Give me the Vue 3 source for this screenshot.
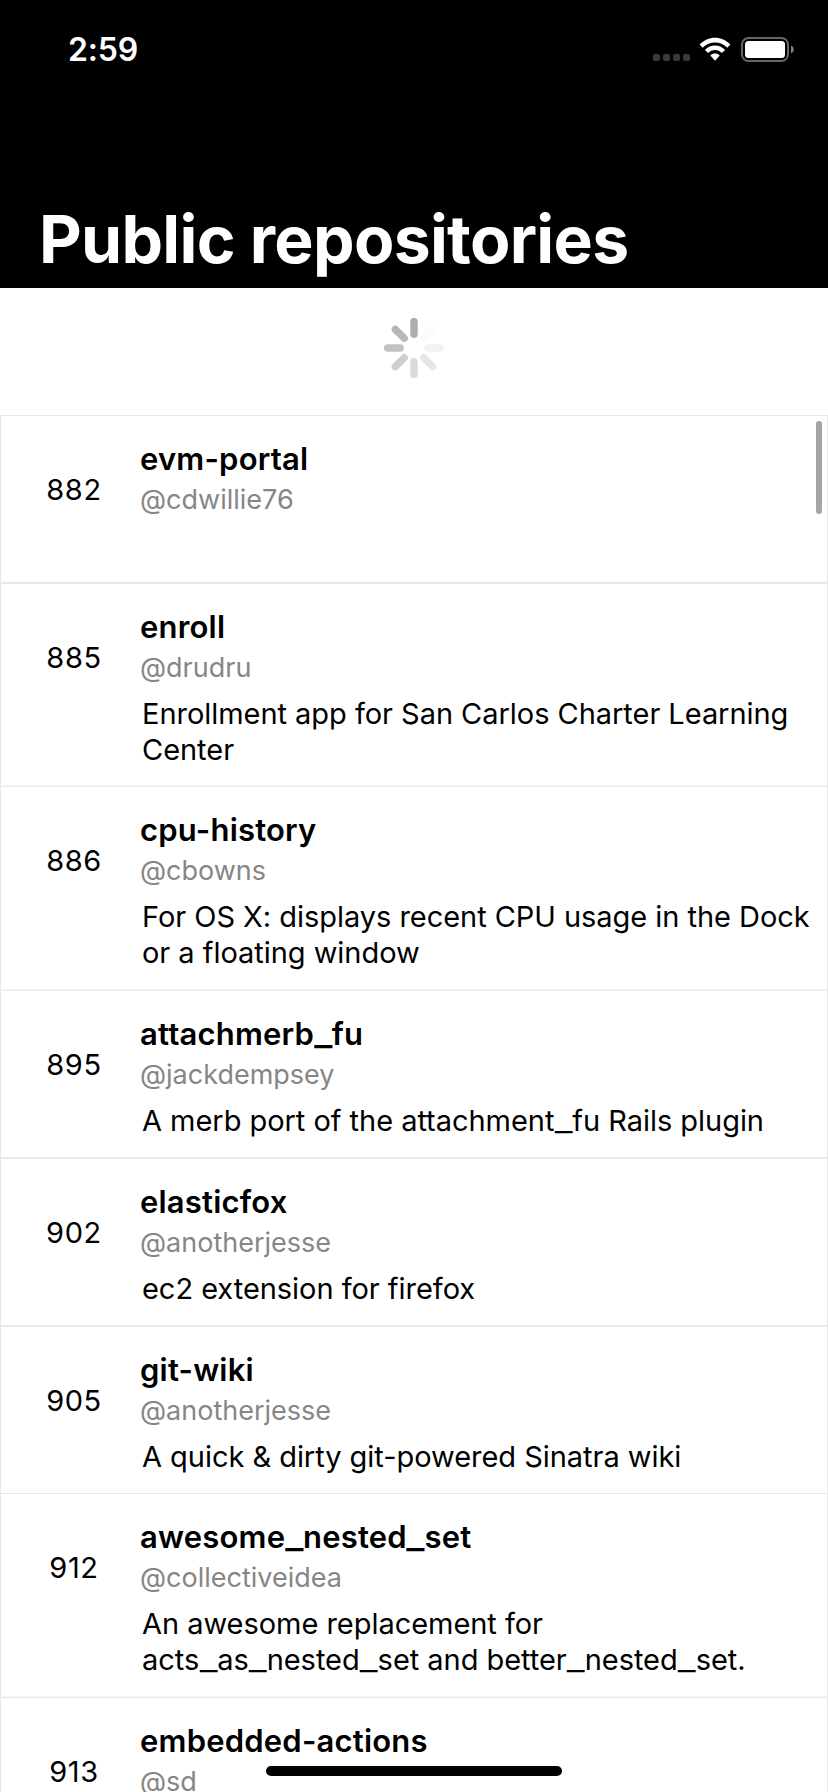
<script setup>
const repos = [
  { id: 882, name: 'evm-portal', owner: 'cdwillie76', lines: [], h: 168 },
  { id: 885, name: 'enroll', owner: 'drudru', lines: ['Enrollment app for San Carlos Charter Learning', 'Center'], h: 203, edge: 'soft' },
  { id: 886, name: 'cpu-history', owner: 'cbowns', lines: ['For OS X: displays recent CPU usage in the Dock', 'or a floating window'], h: 204, edge: 'soft' },
  { id: 895, name: 'attachmerb_fu', owner: 'jackdempsey', lines: ['A merb port of the attachment_fu Rails plugin'], h: 168 },
  { id: 902, name: 'elasticfox', owner: 'anotherjesse', lines: ['ec2 extension for firefox'], h: 168 },
  { id: 905, name: 'git-wiki', owner: 'anotherjesse', lines: ['A quick & dirty git-powered Sinatra wiki'], h: 167, edge: 'open' },
  { id: 912, name: 'awesome_nested_set', owner: 'collectiveidea', lines: ['An awesome replacement for', 'acts_as_nested_set and better_nested_set.'], h: 204, edge: 'soft' },
  { id: 913, name: 'embedded-actions', owner: 'sd', lines: [], h: 168 }
]
const spokes = ['#adadad', '#fcfcfc', '#f2f2f2', '#e6e6e6', '#dadada', '#cecece', '#c2c2c2', '#b7b7b7']
// Underscores are set wider than the rest of the text.
const parts = (text) => text.split(/(_)/)
</script>

<template>
  <div class="screen">
    <header class="header">
      <div class="status">
        <span class="time">2:59</span>
        <div class="indicators">
          <span class="cell"><i v-for="n in 4" :key="n"></i></span>
          <svg class="wifi" width="32" height="25" viewBox="0 0 32 25">
            <g fill="#fff">
              <path d="M0.6 7.6C9 -1.6 23 -1.6 31.4 7.6L28.3 10.8C21.5 3.6 10.5 3.6 3.7 10.8Z" />
              <path d="M5.9 12.9C11.5 7.1 20.5 7.1 26.1 12.9L22.9 16C19.1 12.1 12.9 12.1 9.1 16Z" />
              <path d="M11.3 18.4C13.9 16 18.1 16 20.7 18.4L16 23.7Z" />
            </g>
          </svg>
          <svg class="battery" width="54" height="25" viewBox="0 0 54 25">
            <rect x="1" y="1" width="46" height="23" rx="6.5" fill="none" stroke="#666" stroke-width="2" />
            <rect x="4" y="4" width="40" height="17" rx="3.5" fill="#fff" />
            <path d="M50 8.5C53.7 10 53.7 15 50 16.5Z" fill="#808080" />
          </svg>
        </div>
      </div>
      <h1>Public repositories</h1>
    </header>
    <div class="loading">
      <svg width="60" height="60" viewBox="-30 -30 60 60">
        <line v-for="(c, i) in spokes" :key="i" x1="0" y1="-13.8" x2="0" y2="-26.4" :stroke="c" stroke-width="7.4" stroke-linecap="round" :transform="`rotate(${i * 45})`" />
      </svg>
    </div>
    <main class="list">
      <article v-for="r in repos" :key="r.id" class="row" :class="r.edge" :style="{ height: r.h + 'px' }">
        <div class="id">{{ r.id }}</div>
        <div class="body">
          <h2><span v-for="(t, i) in parts(r.name)" :key="i" :class="{ us: t === '_' }">{{ t }}</span></h2>
          <div class="owner">@{{ r.owner }}</div>
          <p>
            <span v-for="l in r.lines" :key="l" class="line"><span v-for="(t, i) in parts(l)" :key="i" :class="{ us: t === '_' }">{{ t }}</span></span>
          </p>
        </div>
      </article>
      <div class="scrollbar"></div>
    </main>
    <div class="home"></div>
  </div>
</template>

<style scoped>
.screen { position: relative; width: 828px; height: 1792px; overflow: hidden; background: #fff; color: #000; font-family: Inter, "Liberation Sans", sans-serif; }
.header { height: 288px; box-sizing: border-box; background: #000; color: #fff; display: flex; flex-direction: column; justify-content: space-between; }
.status { display: flex; justify-content: space-between; padding: 30px 33px 0 68px; }
.time { font-size: 32px; line-height: 40px; font-weight: 600; letter-spacing: -0.2px; }
.indicators { display: flex; align-items: flex-start; padding-top: 7px; }
.cell { display: flex; gap: 3px; margin: 17px 9px 0 0; }
.cell i { width: 7px; height: 7px; border-radius: 2px; background: #3a3a3a; }
.wifi { margin-right: 10px; }
h1 { margin: 0; padding: 0 0 9px 39px; font-size: 66px; line-height: 80px; font-weight: 700; letter-spacing: -0.7px; white-space: nowrap; }
.loading { height: 127px; box-sizing: border-box; padding-top: 30px; display: flex; justify-content: center; align-items: flex-start; }
.list { position: relative; }
.row { box-sizing: border-box; display: flex; border: 1px solid #e8e8e8; }
.row.soft { border-bottom-color: #f4f4f4; }
.row.open { border-bottom-color: #fff; }
.id { width: 146px; padding-top: 56px; font-size: 29px; line-height: 36px; text-align: center; letter-spacing: 0.6px; }
.body { flex: 1; padding-top: 24px; margin-left: -7px; white-space: nowrap; }
h2 { margin: 0; font-size: 31px; line-height: 38px; font-weight: 600; letter-spacing: 0.2px; }
.owner { margin-top: 5px; font-size: 27px; line-height: 34px; color: #868686; }
p { margin: 11px 0 0 2px; font-size: 29px; line-height: 36px; letter-spacing: -0.04px; }
.line { display: block; }
.us { display: inline-block; transform: scaleX(1.35); margin: 0 2.4px; }
h2 .us { transform: scaleX(1.25); margin: 0 1.5px; }
.scrollbar { position: absolute; top: 6px; right: 6px; width: 6px; height: 93px; border-radius: 3px; background: #a5a5a5; }
.home { position: absolute; left: 266px; top: 1766px; width: 296px; height: 10px; border-radius: 5px; background: #000; }
</style>

<style>
body { margin: 0; background: #fff; }
</style>
